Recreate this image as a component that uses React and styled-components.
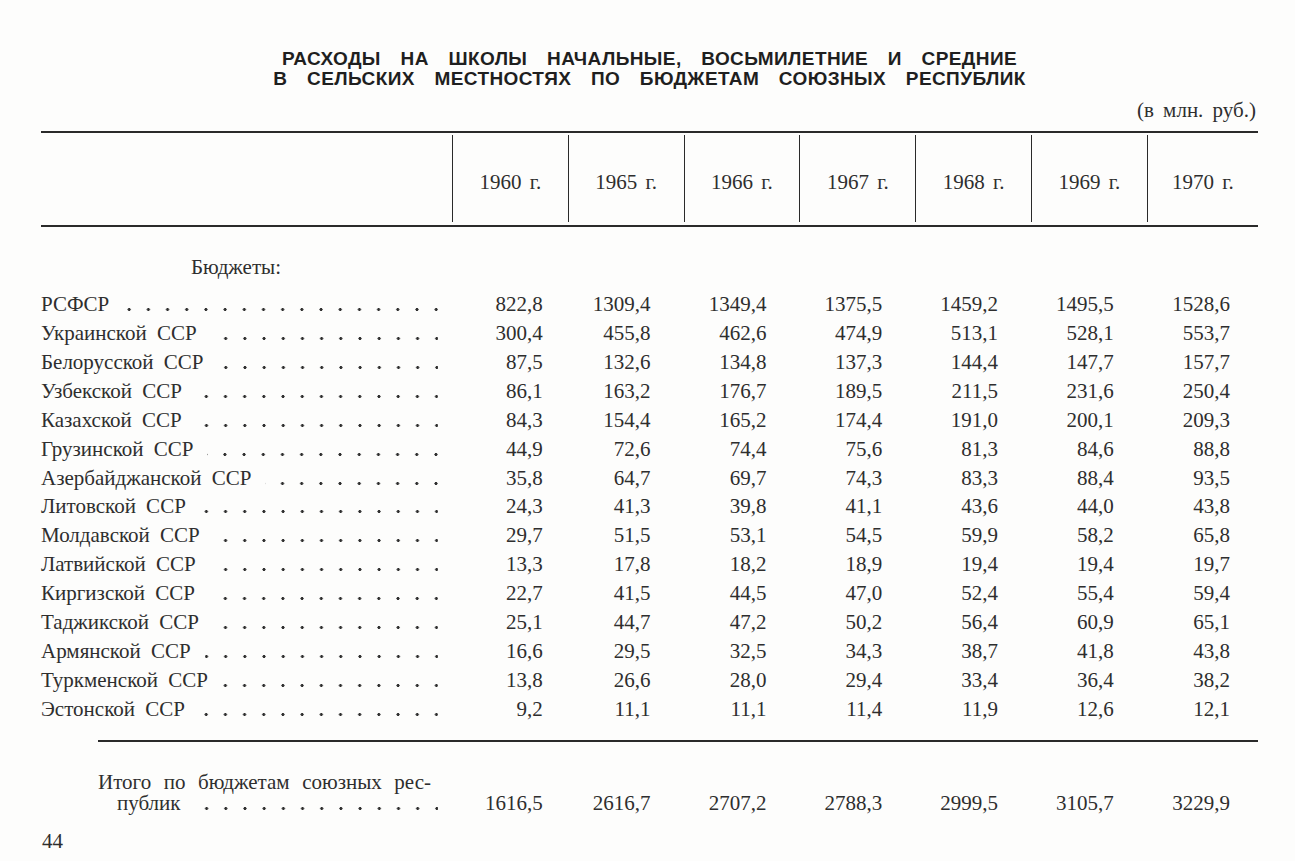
import React from "react";
import styled, { createGlobalStyle } from "styled-components";

const GlobalStyle = createGlobalStyle`
  html, body {
    margin: 0;
    padding: 0;
    background: #fdfdfc;
  }
  body {
    font-family: "Liberation Serif", "Times New Roman", serif;
    color: #2e2e2e;
  }
`;

const Page = styled.div`
  width: 1295px;
  height: 861px;
  box-sizing: border-box;
  padding: 49px 37px 0 41px;
  display: flex;
  flex-direction: column;
  overflow: hidden;
`;

const Title = styled.h1`
  margin: 0;
  text-align: center;
  font-family: "Liberation Sans", Arial, sans-serif;
  font-weight: bold;
  font-size: 19px;
  line-height: 20px;
  letter-spacing: 0.4px;
  word-spacing: 14px;
  color: #1f1f1f;
`;

const Units = styled.div`
  margin-top: 10px;
  text-align: right;
  font-size: 21px;
  line-height: 22px;
  word-spacing: 4px;
  padding-right: 2px;
`;

const Grid = styled.div`
  display: grid;
  grid-template-columns: 411px repeat(6, 115.8px) 1fr;
`;

const Header = styled(Grid)`
  margin-top: 10px;
  height: 92px;
  border-top: 2px solid #2a2a2a;
  border-bottom: 2px solid #2a2a2a;
`;

const YearCell = styled.div`
  margin: 2px 0 3px;
  border-left: 1.5px solid #2a2a2a;
  display: flex;
  align-items: center;
  justify-content: center;
  padding-top: 8px;
  font-size: 21px;
  word-spacing: 3px;
`;

const Section = styled.div`
  margin-top: 26px;
  padding-left: 150px;
  font-size: 21px;
  line-height: 29px;
  margin-bottom: 8px;
`;

const Row = styled(Grid)`
  font-size: 21px;
  line-height: 28.93px;
  height: 28.93px;
`;

const Label = styled.div`
  display: flex;
  padding-right: 14px;
  white-space: nowrap;
  word-spacing: 5px;
`;

const Leader = styled.span`
  flex: 1;
  margin-left: 14px;
  background-image: radial-gradient(circle, #2e2e2e 1.3px, transparent 1.8px);
  background-size: 19.2px 5px;
  background-repeat: repeat-x;
  background-position: right -8px top ${(p) => p.$top}px;
`;

const Num = styled.div`
  text-align: right;
  padding-right: ${(p) => p.$pad}px;
`;

const Rule = styled.div`
  margin: ${(p) => p.$gap}px 0 0 ${(p) => p.$left}px;
  border-top: 2px solid #2a2a2a;
`;

const TotalRow = styled(Grid)`
  margin-top: 30px;
  font-size: 21px;
  line-height: 21px;
  align-items: end;
`;

const TotalLabel = styled.div`
  display: flex;
  flex-direction: column;
  padding-right: 14px;
`;

const TotalFirst = styled.div`
  padding: 0 7px 0 57px;
  text-align: justify;
  text-align-last: justify;
`;

const TotalSecond = styled(Label)`
  padding-left: 76px;
  padding-right: 0;
`;

const PageNumber = styled.div`
  margin-top: 16px;
  font-size: 21px;
  line-height: 22px;
  padding-left: 1px;
`;

const years = ["1960", "1965", "1966", "1967", "1968", "1969", "1970"];
const pads = [25, 33, 33, 33, 33, 33, 28];

const rows = [
  ["РСФСР", "822,8", "1309,4", "1349,4", "1375,5", "1459,2", "1495,5", "1528,6"],
  ["Украинской ССР", "300,4", "455,8", "462,6", "474,9", "513,1", "528,1", "553,7"],
  ["Белорусской ССР", "87,5", "132,6", "134,8", "137,3", "144,4", "147,7", "157,7"],
  ["Узбекской ССР", "86,1", "163,2", "176,7", "189,5", "211,5", "231,6", "250,4"],
  ["Казахской ССР", "84,3", "154,4", "165,2", "174,4", "191,0", "200,1", "209,3"],
  ["Грузинской ССР", "44,9", "72,6", "74,4", "75,6", "81,3", "84,6", "88,8"],
  ["Азербайджанской ССР", "35,8", "64,7", "69,7", "74,3", "83,3", "88,4", "93,5"],
  ["Литовской ССР", "24,3", "41,3", "39,8", "41,1", "43,6", "44,0", "43,8"],
  ["Молдавской ССР", "29,7", "51,5", "53,1", "54,5", "59,9", "58,2", "65,8"],
  ["Латвийской ССР", "13,3", "17,8", "18,2", "18,9", "19,4", "19,4", "19,7"],
  ["Киргизской ССР", "22,7", "41,5", "44,5", "47,0", "52,4", "55,4", "59,4"],
  ["Таджикской ССР", "25,1", "44,7", "47,2", "50,2", "56,4", "60,9", "65,1"],
  ["Армянской ССР", "16,6", "29,5", "32,5", "34,3", "38,7", "41,8", "43,8"],
  ["Туркменской ССР", "13,8", "26,6", "28,0", "29,4", "33,4", "36,4", "38,2"],
  ["Эстонской ССР", "9,2", "11,1", "11,1", "11,4", "11,9", "12,6", "12,1"],
];

const totals = ["1616,5", "2616,7", "2707,2", "2788,3", "2999,5", "3105,7", "3229,9"];

const App = () => {
  return (
    <>
      <GlobalStyle />
      <Page>
        <Title>
          РАСХОДЫ НА ШКОЛЫ НАЧАЛЬНЫЕ, ВОСЬМИЛЕТНИЕ И СРЕДНИЕ
          <br />В СЕЛЬСКИХ МЕСТНОСТЯХ ПО БЮДЖЕТАМ СОЮЗНЫХ РЕСПУБЛИК
        </Title>
        <Units>(в млн. руб.)</Units>

        <Header>
          <div />
          {years.map((y) => (
            <YearCell key={y}>{y} г.</YearCell>
          ))}
        </Header>

        <Section>Бюджеты:</Section>

        {rows.map(([name, ...values]) => (
          <Row key={name}>
            <Label>
              {name}
              <Leader $top={17} />
            </Label>
            {values.map((v, i) => (
              <Num key={i} $pad={pads[i]}>
                {v}
              </Num>
            ))}
          </Row>
        ))}

        <Rule $gap={16.5} $left={57} />

        <TotalRow>
          <TotalLabel>
            <TotalFirst>Итого по бюджетам союзных рес-</TotalFirst>
            <TotalSecond>
              публик
              <Leader $top={13} />
            </TotalSecond>
          </TotalLabel>
          {totals.map((v, i) => (
            <Num key={i} $pad={pads[i]}>
              {v}
            </Num>
          ))}
        </TotalRow>

        <PageNumber>44</PageNumber>
      </Page>
    </>
  );
};

export default App;
